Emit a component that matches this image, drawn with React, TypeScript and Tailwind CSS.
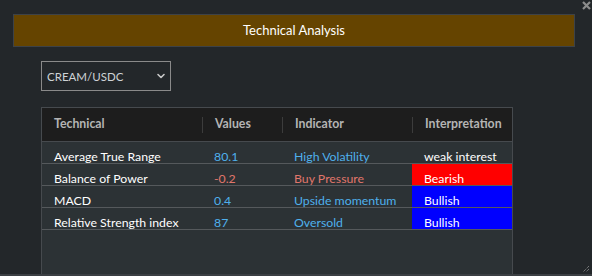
import { ChevronDown } from 'lucide-react'

interface Row {
  name: string
  value: string
  indicator: string
  interpretation: string
  tone: 'up' | 'down'
  badge: 'none' | 'red' | 'blue'
}

const rows: Row[] = [
  { name: 'Average True Range', value: '80.1', indicator: 'High Volatility', interpretation: 'weak interest', tone: 'up', badge: 'none' },
  { name: 'Balance of Power', value: '-0.2', indicator: 'Buy Pressure', interpretation: 'Bearish', tone: 'down', badge: 'red' },
  { name: 'MACD', value: '0.4', indicator: 'Upside momentum', interpretation: 'Bullish', tone: 'up', badge: 'blue' },
  { name: 'Relative Strength index', value: '87', indicator: 'Oversold', interpretation: 'Bullish', tone: 'up', badge: 'blue' },
]

export default function App() {
  return (
    <div
      className="relative flex flex-col w-[592px] h-[276px] bg-[#23272a] overflow-hidden"
      style={{ fontFamily: 'Lato, "Noto Sans", sans-serif' }}
    >
      {/* close button */}
      <button className="absolute right-[1px] top-[1px] text-[#8c8c8c]" title="Close">
        <svg width="9" height="9" viewBox="0 0 9 9">
          <path d="M1 1 L8 8 M8 1 L1 8" stroke="currentColor" strokeWidth="2.2" />
        </svg>
      </button>

      <div className="flex-1 flex flex-col">
        {/* Title banner */}
        <div className="ml-[13px] mt-[14px] w-[562px] h-[33px] bg-[#654400] border border-[#3d4247] flex items-center justify-center">
          <span className="text-white text-[13px]">Technical Analysis</span>
        </div>

        {/* Pair select */}
        <div className="ml-[41px] mt-[14px] w-[130px] h-[30px] border border-[#8a8a8a] flex items-center justify-between pl-[5px] pr-[3px]">
          <span className="text-[#cfd3d6] text-[11.5px] pt-[2px]">CREAM/USDC</span>
          <ChevronDown className="w-[12px] h-[12px] text-[#c8c8c8]" strokeWidth={3.2} />
        </div>

        {/* Table */}
        <div className="ml-[41px] mt-[16px] w-[472px] flex-1 bg-[#2c3235] border-x border-t border-[#464a4e] text-[12.3px] whitespace-nowrap">
          <div className="flex h-[34px] bg-[#1d1d1d] border-b border-[#464a4e] items-center text-[#b4b4b4] font-bold">
            <div className="w-[160px] shrink-0 pl-[12px]">Technical</div>
            <div className="w-[80px] shrink-0 pl-[12px] border-l border-[#3c3c3c] h-[16px] flex items-center">Values</div>
            <div className="w-[130px] shrink-0 pl-[12px] border-l border-[#3c3c3c] h-[16px] flex items-center">Indicator</div>
            <div className="w-[100px] shrink-0 pl-[12px] border-l border-[#3c3c3c] h-[16px] flex items-center">Interpretation</div>
          </div>

          {rows.map((r) => {
            const tone = r.tone === 'up' ? 'text-[#4fb0ec]' : 'text-[#e0766b]'
            const badge =
              r.badge === 'red' ? 'bg-[#ff0000]' : r.badge === 'blue' ? 'bg-[#0000ff]' : ''
            return (
              <div key={r.name} className="flex h-[22px] border-b border-[#55595c] overflow-hidden leading-[16px]">
                <div className="w-[160px] shrink-0 pl-[12px] pt-[7px] text-white">{r.name}</div>
                <div className={`w-[80px] shrink-0 pl-[12px] pt-[7px] ${tone}`}>{r.value}</div>
                <div className={`w-[130px] shrink-0 pl-[12px] pt-[7px] ${tone}`}>{r.indicator}</div>
                <div className={`w-[100px] shrink-0 pl-[12px] pt-[7px] text-white ${badge}`}>{r.interpretation}</div>
              </div>
            )
          })}
        </div>
      </div>

      {/* bottom edge with resize grip */}
      <div className="relative h-[2px] bg-[#3b3f43]">
        <svg className="absolute right-[2px] bottom-[3px]" width="8" height="8" viewBox="0 0 8 8">
          <path d="M7 1 L1 7 M7 4 L4 7" stroke="#9a9a9a" strokeWidth="1" strokeDasharray="1 1" />
        </svg>
      </div>
    </div>
  )
}
